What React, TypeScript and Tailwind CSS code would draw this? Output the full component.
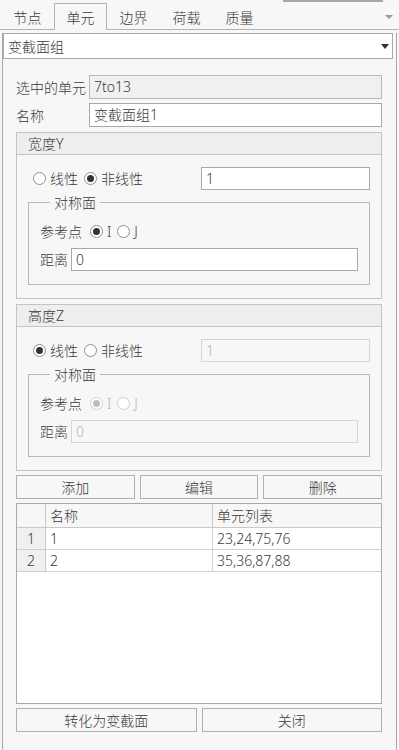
import React from "react";

const FONT = "font-['Noto_Sans','Noto_Sans_CJK_SC',sans-serif]";

interface RadioProps {
  checked?: boolean;
  disabled?: boolean;
  label: string;
}

const Radio: React.FC<RadioProps> = ({ checked, disabled, label }) => (
  <div className="flex items-center">
    <div
      className={`w-[13px] h-[13px] rounded-full border flex items-center justify-center bg-white ${
        disabled ? "border-[#cfcfcf]" : "border-[#8f8f8f]"
      }`}
    >
      {checked && (
        <div
          className={`w-[7px] h-[7px] rounded-full ${
            disabled ? "bg-[#bdbdbd]" : "bg-[#333333]"
          }`}
        />
      )}
    </div>
    <span className={`ml-[4px] ${disabled ? "text-[#b5b5b5]" : ""}`}>{label}</span>
  </div>
);

interface SectionProps {
  title: string;
  linear: boolean;
  disabled?: boolean;
}

const Section: React.FC<SectionProps> = ({ title, linear, disabled }) => (
  <div className="border border-[#c4c4c4] h-[167px]">
    <div className="h-[22px] bg-[#eeeeee] border-b border-[#c4c4c4] pl-[11px] leading-[22px]">
      {title}
    </div>
    <div className="pl-[16px] pr-[11px]">
      <div className="mt-[12px] flex items-center h-[23px]">
        <div className="flex items-center w-[168px] gap-[6px]">
          <Radio checked={linear} label="线性" />
          <Radio checked={!linear} label="非线性" />
        </div>
        <div
          className={`flex-1 h-[23px] border pl-[4px] leading-[21px] ${
            disabled
              ? "border-[#d6d6d6] text-[#b5b5b5]"
              : "border-[#a9a9a9] bg-white"
          }`}
        >
          1
        </div>
      </div>
      <fieldset className="mt-[3px] ml-[-5px] border border-[#b8b8b8] pl-[11px] pr-[11px] pb-[13px]">
        <legend className="ml-[10px] px-[4px] leading-[19px]">对称面</legend>
        <div className="mt-[9px] h-[20px] flex items-center">
          <span className="w-[50px]">参考点</span>
          <div className="flex items-center gap-[6px]">
            <Radio checked label="I" disabled={disabled} />
            <Radio label="J" disabled={disabled} />
          </div>
        </div>
        <div className="mt-[7px] flex items-center h-[23px]">
          <span className="w-[31px]">距离</span>
          <div
            className={`flex-1 h-[23px] border pl-[4px] leading-[21px] ${
              disabled
                ? "border-[#d6d6d6] text-[#b5b5b5]"
                : "border-[#a9a9a9] bg-white"
            }`}
          >
            0
          </div>
        </div>
      </fieldset>
    </div>
  </div>
);

const Button: React.FC<{ label: string }> = ({ label }) => (
  <div className="h-[24px] border border-[#b0b0b0] bg-[#f7f7f7] flex items-center justify-center">
    {label}
  </div>
);

const tabs = ["节点", "单元", "边界", "荷载", "质量"];

const rows = [
  { id: 1, name: "1", list: "23,24,75,76" },
  { id: 2, name: "2", list: "35,36,87,88" },
];

export default function App() {
  return (
    <div
      className={`w-[399px] h-[750px] bg-[#f7f7f7] text-[#3a3a3a] text-[14px] font-light overflow-hidden ${FONT}`}
    >
      {/* tab strip */}
      <div className="relative h-[30px] border-b border-[#b4b4b4] flex items-end pl-[1px]">
        <div className="absolute top-0 left-[283px] w-[100px] h-[2px] bg-[#a8a8a8]" />
        {tabs.map((t) => (
          <div
            key={t}
            className={`w-[53px] h-[26px] flex items-center justify-center -mb-px ${
              t === "单元"
                ? "border border-b-0 border-[#b4b4b4] bg-[#f7f7f7] h-[27px]"
                : ""
            }`}
          >
            {t}
          </div>
        ))}
        <div className="absolute right-[6px] top-[15px] w-0 h-0 border-l-[4px] border-r-[4px] border-t-[4px] border-l-transparent border-r-transparent border-t-[#9a9a9a]" />
      </div>

      {/* panel */}
      <div className="ml-[2px] w-[395px] h-[720px] border-l border-r border-[#a8a8a8]">
        <div className="mt-[3px] w-[390px] h-[26px] border border-[#a9a9a9] bg-white flex items-center justify-between pl-[4px] pr-[3px]">
          <span>变截面组</span>
          <div className="w-0 h-0 border-l-[4px] border-r-[4px] border-t-[5px] border-l-transparent border-r-transparent border-t-[#333333]" />
        </div>

        <div className="pl-[13px] w-[379px]">
          <div className="mt-[16px] flex items-center h-[24px]">
            <span className="w-[73px]">选中的单元</span>
            <div className="flex-1 h-[24px] border border-[#b8b8b8] bg-[#f0f0f0] pl-[4px] leading-[22px]">
              7to13
            </div>
          </div>
          <div className="mt-[4px] flex items-center h-[24px]">
            <span className="w-[73px]">名称</span>
            <div className="flex-1 h-[24px] border border-[#a9a9a9] bg-white pl-[4px] leading-[22px]">
              变截面组1
            </div>
          </div>

          <div className="mt-[5px] w-[366px]">
            <Section title="宽度Y" linear={false} />
          </div>
          <div className="mt-[5px] w-[366px]">
            <Section title="高度Z" linear disabled />
          </div>

          <div className="mt-[4px] w-[366px] grid grid-cols-3 gap-[5px]">
            <Button label="添加" />
            <Button label="编辑" />
            <Button label="删除" />
          </div>

          <div className="mt-[4px] w-[366px] h-[201px] border border-[#a9a9a9] bg-white">
            <div className="flex h-[24px] border-b border-[#c8c8c8] bg-[#f7f7f7]">
              <div className="w-[29px] border-r border-[#c8c8c8]" />
              <div className="w-[167px] border-r border-[#c8c8c8] pl-[4px] leading-[23px]">
                名称
              </div>
              <div className="flex-1 pl-[4px] leading-[23px]">单元列表</div>
            </div>
            {rows.map((r) => (
              <div key={r.id} className="flex h-[22px] border-b border-[#d0d0d0]">
                <div className="w-[29px] border-r border-[#c8c8c8] bg-[#f0f0f0] text-center leading-[21px]">
                  {r.id}
                </div>
                <div className="w-[167px] border-r border-[#d0d0d0] pl-[4px] leading-[21px]">
                  {r.name}
                </div>
                <div className="flex-1 pl-[4px] leading-[21px]">{r.list}</div>
              </div>
            ))}
          </div>

          <div className="mt-[4px] w-[366px] grid grid-cols-2 gap-[5px]">
            <Button label="转化为变截面" />
            <Button label="关闭" />
          </div>
        </div>
      </div>
    </div>
  );
}
